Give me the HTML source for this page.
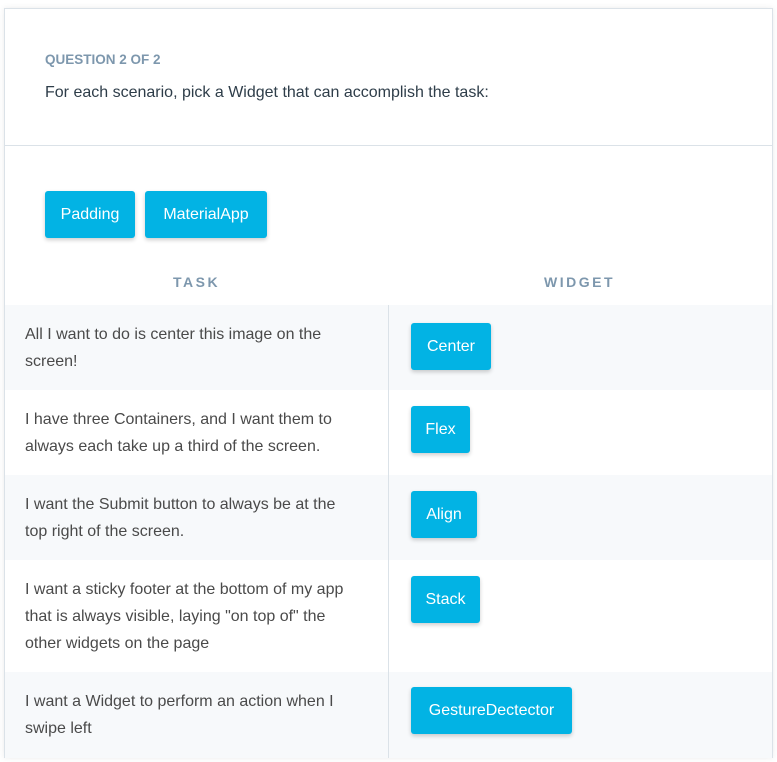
<!DOCTYPE html>
<html><head><style>
*{box-sizing:border-box;margin:0;padding:0}
body{width:777px;height:762px;background:#fff;font-family:"Liberation Sans",sans-serif;color:#2e3d49;position:relative;overflow:hidden}
.card{position:absolute;left:4px;top:8px;width:769px;height:750px;border:1px solid #dbe2e8;box-shadow:0 0 6px rgba(0,0,0,0.08);background:#fff}
.lbl{position:absolute;left:40px;top:43px;font-size:13.5px;font-weight:bold;color:#7d97ad}
.q{position:absolute;left:40px;top:75px;font-size:16px;color:#2e3d49}
.hr{position:absolute;left:0;top:136px;width:100%;height:1px;background:#dbe2e8}
.btn{position:absolute;height:47px;background:#02b3e4;color:#fff;font-size:16px;border-radius:3px;box-shadow:0 2px 4px rgba(0,0,0,0.2);display:flex;align-items:center;justify-content:center;padding-top:1px}
.th{position:absolute;top:265px;font-size:14px;font-weight:bold;letter-spacing:2.5px;color:#7d97ad}
.row{position:absolute;left:0;width:767px}
.row.alt{background:#f7f9fb}
.row p{position:absolute;left:20px;top:16px;width:335px;font-size:16px;line-height:27px;color:#4a4a4a}
.vd{position:absolute;left:383px;top:296px;width:1px;height:453px;background:#dbe2e8}
</style></head><body>
<div class="card">
<div class="lbl">QUESTION 2 OF 2</div>
<div class="q">For each scenario, pick a Widget that can accomplish the task:</div>
<div class="hr"></div>
<div class="btn" style="left:40px;top:182px;width:90px">Padding</div>
<div class="btn" style="left:140px;top:182px;width:122px">MaterialApp</div>
<div class="th" style="left:168px">TASK</div>
<div class="th" style="left:539px">WIDGET</div>
<div class="row alt" style="top:296px;height:85px"><p>All I want to do is center this image on the screen!</p></div>
<div class="row" style="top:381px;height:85px"><p>I have three Containers, and I want them to always each take up a third of the screen.</p></div>
<div class="row alt" style="top:466px;height:85px"><p>I want the Submit button to always be at the top right of the screen.</p></div>
<div class="row" style="top:551px;height:112px"><p>I want a sticky footer at the bottom of my app that is always visible, laying "on top of" the other widgets on the page</p></div>
<div class="row alt" style="top:663px;height:86px"><p>I want a Widget to perform an action when I swipe left</p></div>
<div class="vd"></div>
<div class="btn" style="left:406px;top:314px;width:80px">Center</div>
<div class="btn" style="left:406px;top:397px;width:59px">Flex</div>
<div class="btn" style="left:406px;top:482px;width:66px">Align</div>
<div class="btn" style="left:406px;top:567px;width:69px">Stack</div>
<div class="btn" style="left:406px;top:678px;width:161px">GestureDectector</div>
</div>
</body></html>
